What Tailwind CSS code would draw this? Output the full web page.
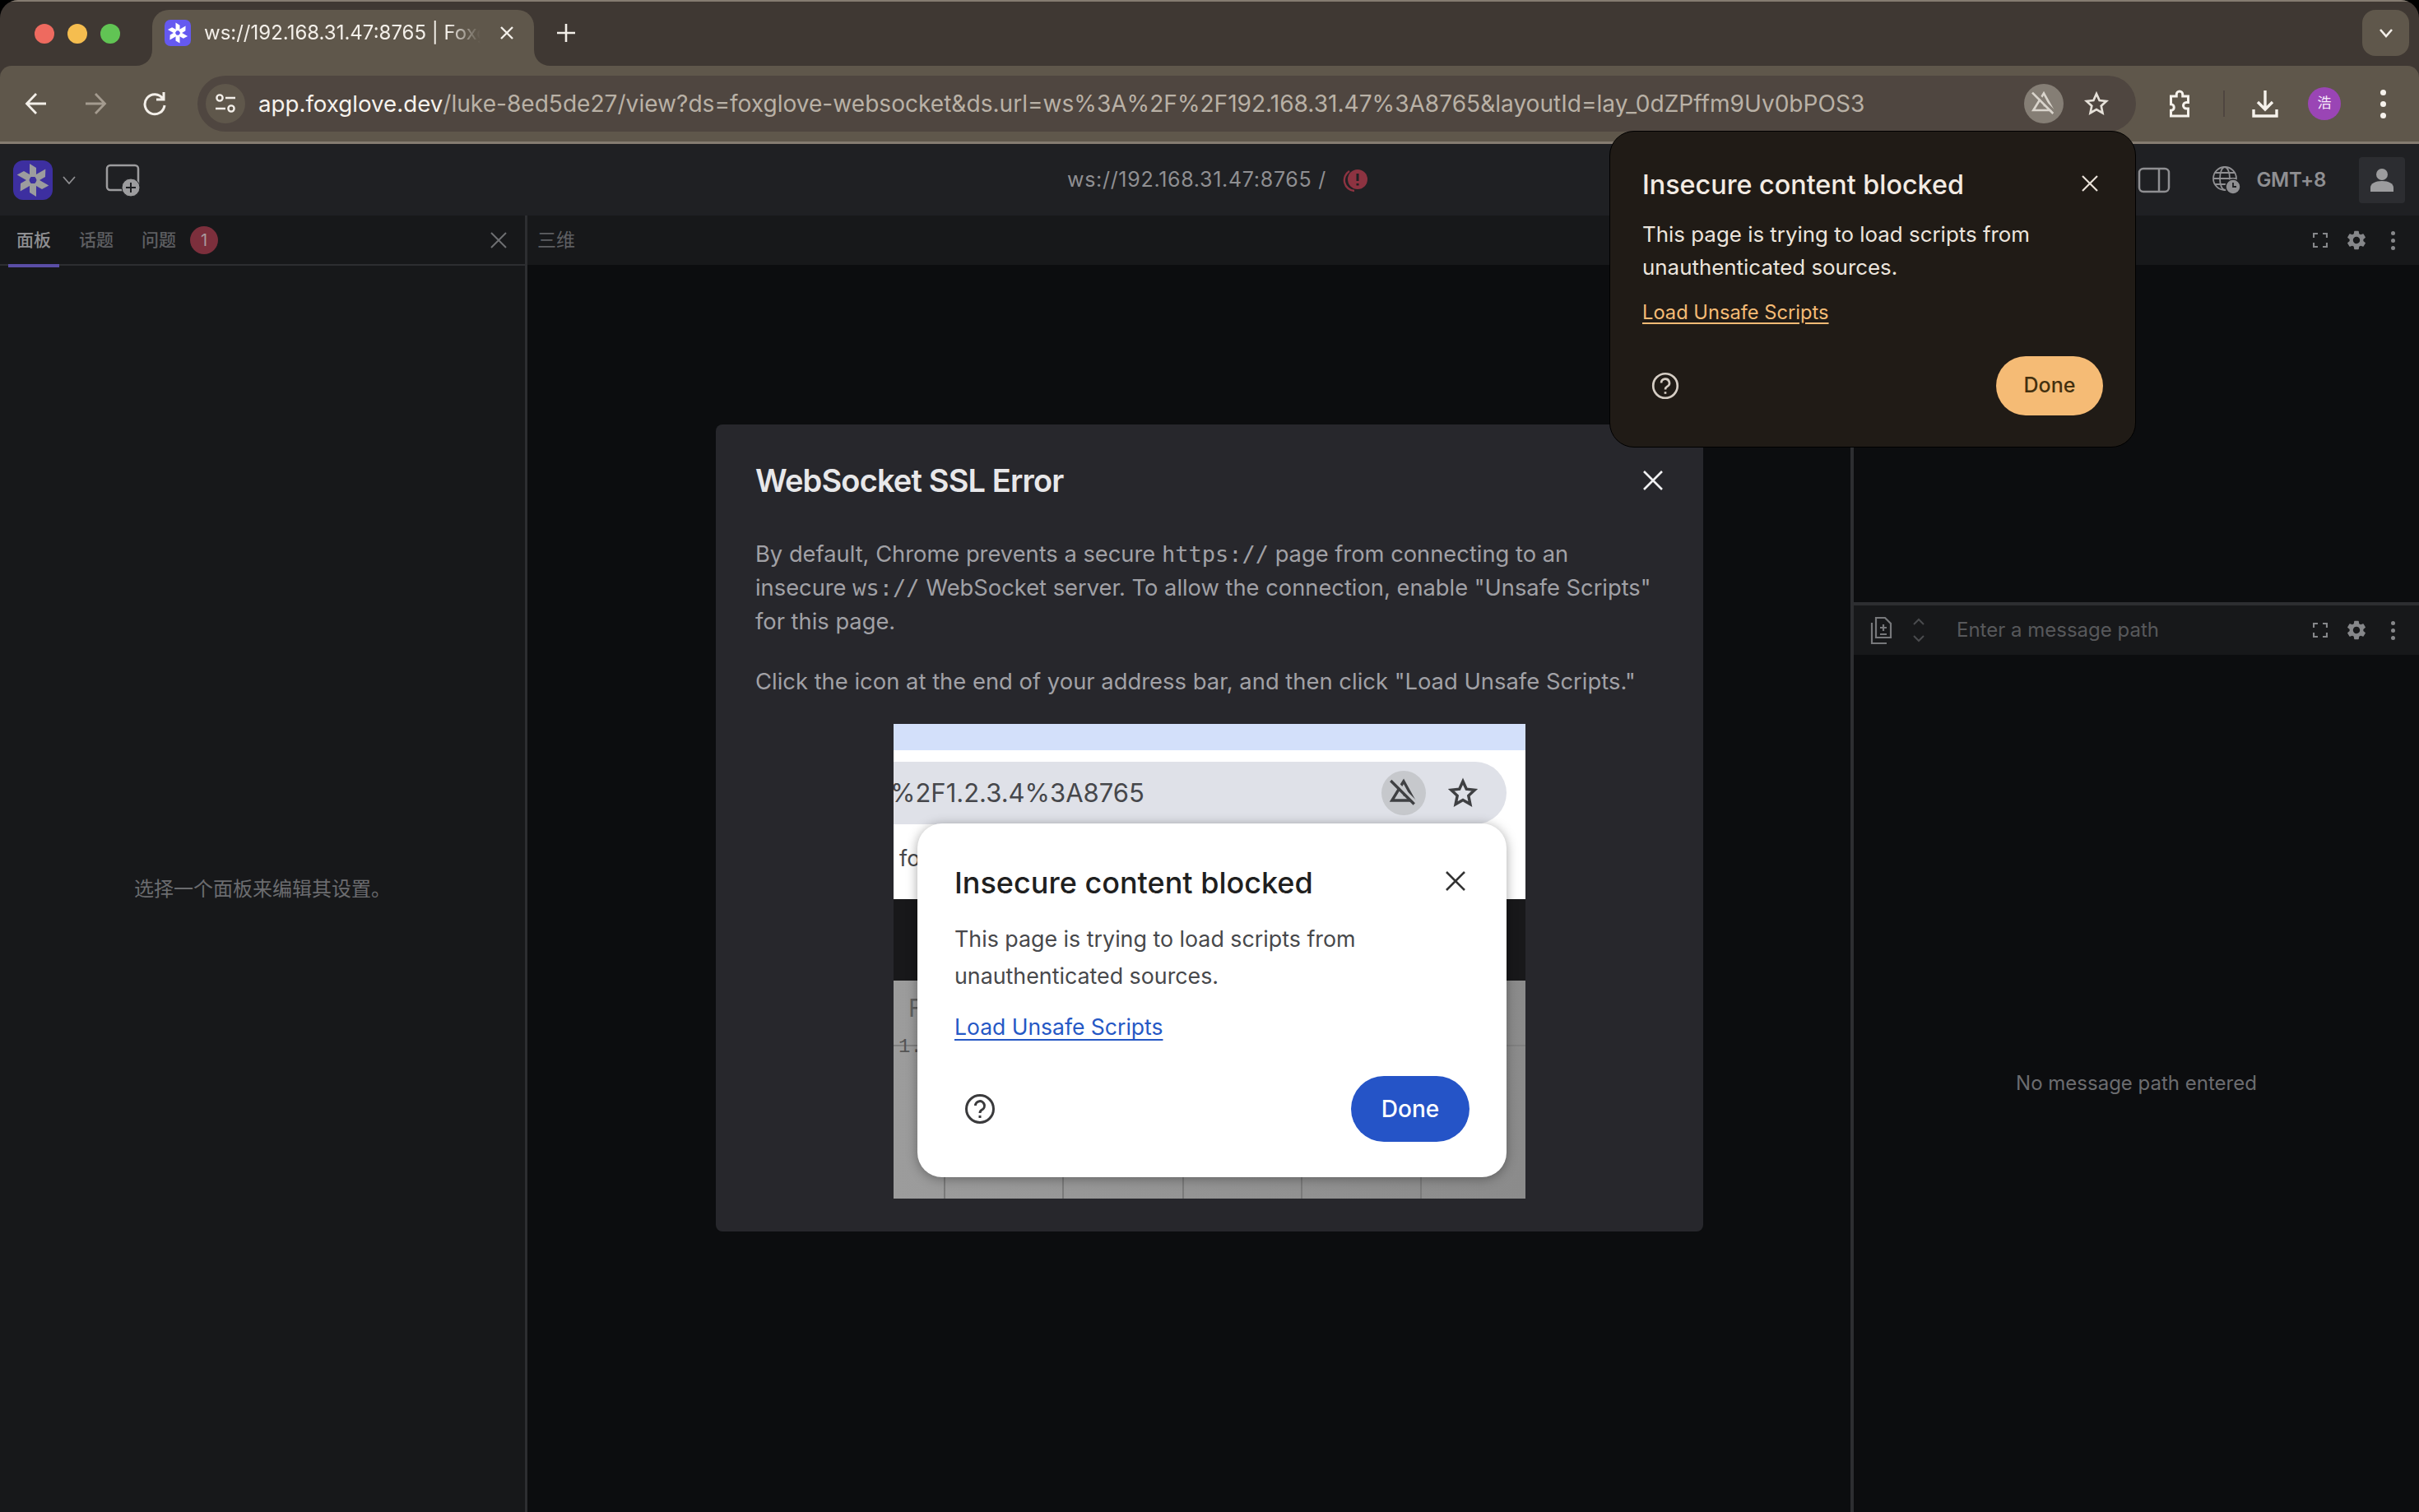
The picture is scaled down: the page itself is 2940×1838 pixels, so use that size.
<!DOCTYPE html>
<html lang="en">
<head>
  <meta charset="UTF-8" />
  <title>ws://192.168.31.47:8765 | Foxglove</title>
  <script src="https://cdn.jsdelivr.net/npm/@tailwindcss/browser@4"></script>
</head>
<body class="bg-black">
<div class="relative w-[2940px] h-[1838px] overflow-hidden flex flex-col rounded-t-[22px] bg-[#3f3833] font-['Inter','Noto_Sans_CJK_SC',sans-serif]">

  <!-- Tab strip -->
  <div class="relative h-[80px] shrink-0 flex items-start border-t-2 border-[#857c71]">
    <div class="flex items-center gap-[16px] pl-[42px] h-[78px] w-[185px]">
      <span class="w-[24px] h-[24px] rounded-full bg-[#ee6a5f]"></span>
      <span class="w-[24px] h-[24px] rounded-full bg-[#f5bd4f]"></span>
      <span class="w-[24px] h-[24px] rounded-full bg-[#61c454]"></span>
    </div>
    <!-- Active tab -->
    <div class="relative mt-[10px] w-[464px] h-[68px] bg-[#5f574b] rounded-t-[20px] flex items-center pl-[15px] pb-[12px]">
      <svg class="absolute -left-[20px] bottom-0" width="20" height="20" viewBox="0 0 20 20"><path d="M20 0V20H0C12 20 20 12 20 0Z" fill="#5f574b"/></svg>
      <svg class="absolute -right-[20px] bottom-0" width="20" height="20" viewBox="0 0 20 20"><path d="M0 0V20H20C8 20 0 12 0 0Z" fill="#5f574b"/></svg>
      <span class="w-[32px] h-[32px] rounded-[7px] bg-[#6559f0] flex items-center justify-center">
        <svg width="30" height="30" viewBox="-24 -24 48 48" fill="#fff">
          <polygon points="-4,-4 -4,-20 4,-15 4,-4"/>
          <polygon points="-4,-4 -4,-20 4,-15 4,-4" transform="rotate(60)"/>
          <polygon points="-4,-4 -4,-20 4,-15 4,-4" transform="rotate(120)"/>
          <polygon points="-4,-4 -4,-20 4,-15 4,-4" transform="rotate(180)"/>
          <polygon points="-4,-4 -4,-20 4,-15 4,-4" transform="rotate(240)"/>
          <polygon points="-4,-4 -4,-20 4,-15 4,-4" transform="rotate(300)"/>
          <circle r="4" fill="#6559f0"/>
        </svg>
      </span>
      <span class="ml-[16px] w-[336px] overflow-hidden whitespace-nowrap text-[24px] text-[#f3efe9] [mask-image:linear-gradient(to_right,black_88%,transparent)]">ws://192.168.31.47:8765 | Foxglove</span>
      <svg class="absolute left-[421px] top-[18px]" width="20" height="20" viewBox="0 0 20 20" stroke="#f3efe9" stroke-width="2.4"><path d="M3 3l14 14M17 3L3 17"/></svg>
    </div>
    <svg class="ml-[28px] mt-[27px]" width="22" height="22" viewBox="0 0 22 22" stroke="#f3efe9" stroke-width="2.6"><path d="M11 0v22M0 11h22"/></svg>
    <div class="ml-auto mr-[12px] mt-[10px] w-[57px] h-[56px] rounded-[16px] bg-[#5f574b] flex items-center justify-center">
      <svg width="20" height="14" viewBox="0 0 20 14" fill="none" stroke="#f3efe9" stroke-width="2.6"><path d="M3 3l7 8 7-8"/></svg>
    </div>
  </div>

  <!-- Toolbar -->
  <div class="h-[95px] shrink-0 bg-[#5f574b] border-b-[3px] border-[#857c71] rounded-t-[14px] flex items-center">
    <div class="w-[240px] shrink-0 h-full flex items-center">
      <svg class="ml-[30px]" width="28" height="28" viewBox="0 0 28 28" fill="none" stroke="#f3efe9" stroke-width="2.8"><path d="M26 14H3M14 2L2.5 14 14 26"/></svg>
      <svg class="ml-[44px]" width="28" height="28" viewBox="0 0 28 28" fill="none" stroke="#a49b8f" stroke-width="2.8"><path d="M2 14h23M14 2l11.5 12L14 26"/></svg>
      <svg class="ml-[44px]" width="28" height="30" viewBox="0 0 28 30" fill="none" stroke="#f3efe9" stroke-width="3"><path d="M24 9a12 12 0 1 0 2 8M25 1v9h-9"/></svg>
    </div>
    <!-- Address bar -->
    <div class="w-[2356px] h-[68px] shrink-0 rounded-full bg-[#4f4640] flex items-center pl-[10px] pr-[32px]">
      <span class="w-[48px] h-[48px] shrink-0 rounded-full bg-[#5f574b] flex items-center justify-center">
        <svg width="26" height="26" viewBox="0 0 26 26" fill="none" stroke="#f3efe9" stroke-width="2.4"><circle cx="6" cy="6" r="3.6"/><path d="M13 6h12M1 19h12"/><circle cx="20" cy="19" r="3.6"/></svg>
      </span>
      <span class="ml-[16px] text-[28.08px] whitespace-nowrap text-[#b9b1a6]"><span class="text-[27.7px] text-[#f6f2ec]">app.foxglove.dev</span>/luke-8ed5de27/view?ds=foxglove-websocket&amp;ds.url=ws%3A%2F%2F192.168.31.47%3A8765&amp;layoutId=lay_0dZPffm9Uv0bPOS3</span>
      <span class="ml-auto w-[48px] h-[48px] rounded-full bg-[#857e75] flex items-center justify-center">
        <svg width="48" height="48" viewBox="0 0 72 72" fill="none" stroke-width="4">
          <path d="M36 17L17 48h36z" stroke="#d9d4cc"/>
          <path d="M19 14l38 38" stroke="#857e75" stroke-width="5"/>
          <path d="M15 16l38 38" stroke="#d9d4cc"/>
          <path d="M37 37v4" stroke="#d9d4cc" stroke-width="3"/>
        </svg>
      </span>
      <svg class="ml-[24px]" width="32" height="32" viewBox="0 0 24 24" fill="none" stroke="#e6e1d9" stroke-width="2"><path d="M12 3l2.7 6 6.3.7-4.7 4.4 1.3 6.4-5.6-3.2-5.6 3.2 1.3-6.4L3 9.7 9.300 9z"/></svg>
    </div>
    <div class="flex-1 h-full flex items-center">
      <svg class="ml-[35px]" width="36" height="36" viewBox="0 0 24 24" fill="none" stroke="#f6f2ec" stroke-width="2"><path d="M5 6h4.500V4.500a2.500 2.500 0 0 1 5 0V6H19v5h-1.500a2.500 2.500 0 0 0 0 5H19v6H5v-4.500a2.500 2.500 0 0 0 0-5V6z"/></svg>
      <span class="ml-[35px] w-[2px] h-[32px] bg-[#4f4640]"></span>
      <svg class="ml-[33px]" width="32" height="34" viewBox="0 0 32 34" fill="none" stroke="#f6f2ec" stroke-width="3.400"><path d="M16 1v22M7 15l9 9 9-9M2 24v8h28v-8"/></svg>
      <span class="ml-[36px] w-[40px] h-[40px] rounded-full bg-[#9a45b5] flex items-center justify-center text-[17px] text-[#f6eafa]">浩</span>
      <span class="ml-[48px] flex flex-col gap-[7px]">
        <span class="w-[7px] h-[7px] rounded-full bg-[#f6f2ec]"></span>
        <span class="w-[7px] h-[7px] rounded-full bg-[#f6f2ec]"></span>
        <span class="w-[7px] h-[7px] rounded-full bg-[#f6f2ec]"></span>
      </span>
    </div>
  </div>

  <!-- App -->
  <div class="relative flex-1 min-h-0 flex flex-col bg-[#0c0d0f]">
    <!-- App header -->
    <div class="relative h-[87px] shrink-0 bg-[#1f2023] flex items-center">
      <span class="ml-[16px] w-[48px] h-[48px] rounded-[12px] bg-[#3d2fa0] flex items-center justify-center">
        <svg width="48" height="48" viewBox="-24 -24 48 48" fill="#9c9c9e">
          <polygon points="-4,-4 -4,-20 4,-15 4,-4"/>
          <polygon points="-4,-4 -4,-20 4,-15 4,-4" transform="rotate(60)"/>
          <polygon points="-4,-4 -4,-20 4,-15 4,-4" transform="rotate(120)"/>
          <polygon points="-4,-4 -4,-20 4,-15 4,-4" transform="rotate(180)"/>
          <polygon points="-4,-4 -4,-20 4,-15 4,-4" transform="rotate(240)"/>
          <polygon points="-4,-4 -4,-20 4,-15 4,-4" transform="rotate(300)"/>
          <circle r="4" fill="#3d2fa0"/>
        </svg>
      </span>
      <svg class="ml-[12px]" width="16" height="10" viewBox="0 0 16 10" fill="none" stroke="#8d8d90" stroke-width="1.800"><path d="M1 1l7 8 7-8"/></svg>
      <svg class="ml-[36px]" width="44" height="40" viewBox="0 0 44 40" fill="none"><rect x="2" y="2" width="38" height="30" rx="4" stroke="#9c9c9e" stroke-width="2.500"/><circle cx="31" cy="29" r="11" fill="#9c9c9e" stroke="#1f2023" stroke-width="1"/><path d="M31 23v12M25 29h12" stroke="#1f2023" stroke-width="2"/></svg>
      <div class="absolute left-[1297px] top-0 h-full flex items-center">
        <span class="text-[25px] tracking-[0.7px] whitespace-nowrap text-[#8f8f92]">ws://192.168.31.47:8765 /</span>
        <svg class="ml-[20px]" width="32" height="32" viewBox="0 0 32 32" fill="none"><path d="M8 5a13 13 0 0 0 6 24" stroke="#8d3341" stroke-width="2.400"/><circle cx="18" cy="15" r="12" fill="#8d3341"/><path d="M18 8v9M18 20v2.500" stroke="#1f2023" stroke-width="3"/></svg>
      </div>
      <div class="ml-auto flex items-center pr-[17px]">
        <svg width="40" height="32" viewBox="0 0 40 32" fill="none" stroke="#8f8f92" stroke-width="2.500"><rect x="2" y="2" width="36" height="28" rx="5"/><path d="M26 2v28"/></svg>
        <svg class="ml-[50px]" width="36" height="36" viewBox="0 0 36 36" fill="none" stroke="#8f8f92" stroke-width="1.800"><circle cx="16" cy="16" r="14"/><ellipse cx="16" cy="16" rx="6" ry="14"/><path d="M2 16h28M4 9h24M4 23h24"/><circle cx="26" cy="26" r="9" fill="#8f8f92" stroke="#1f2023" stroke-width="1.500"/><path d="M26 21v5h4" stroke="#1f2023" stroke-width="1.800"/></svg>
        <span class="ml-[18px] text-[24px] font-semibold tracking-[-0.3px] text-[#8f8f92]">GMT+8</span>
        <span class="ml-[40px] w-[56px] h-[56px] rounded-[4px] bg-[#2c2d31] flex items-center justify-center">
          <svg width="32" height="32" viewBox="0 0 32 32" fill="#9c9c9e"><circle cx="16" cy="9" r="7"/><path d="M2 30v-5c0-5 6-8 14-8s14 3 14 8v5z"/></svg>
        </span>
      </div>
    </div>

    <!-- Panels -->
    <div class="flex-1 min-h-0 flex">
      <!-- Sidebar -->
      <aside class="w-[638px] shrink-0 flex flex-col bg-[#17181a]">
        <div class="relative h-[61px] shrink-0 flex items-center border-b-2 border-[#2d2e31] text-[21px] font-medium text-[#5e5f62]">
          <span class="relative ml-[20px] w-[44px] text-[#8f8f92]">面板<span class="absolute -left-[10px] -bottom-[18px] w-[62px] h-[4px] bg-[#5a4ea6]"></span></span>
          <span class="ml-[32px] w-[44px]">话题</span>
          <span class="ml-[32px] w-[44px]">问题</span>
          <span class="ml-[15px] w-[34px] h-[34px] rounded-full bg-[#7c2f3c] flex items-center justify-center text-[20px] font-normal text-[#a99a9c]">1</span>
          <svg class="ml-auto mr-[22px]" width="20" height="20" viewBox="0 0 20 20" stroke="#6e6f72" stroke-width="2"><path d="M1 1l18 18M19 1L1 19"/></svg>
        </div>
        <div class="flex-1 flex items-center justify-center text-[24px] text-[#6b6c6f]">选择一个面板来编辑其设置。</div>
      </aside>
      <div class="w-[3px] shrink-0 bg-[#2d2e31]"></div>

      <!-- 3D panel -->
      <main class="w-[1608px] shrink-0 flex flex-col">
        <div class="h-[60px] shrink-0 bg-[#17181a] flex items-center pl-[12px] text-[23px] text-[#5e5f62]">三维</div>
      </main>
      <div class="w-[4px] shrink-0 bg-[#2d2e31]"></div>

      <!-- Right column -->
      <div class="flex-1 flex flex-col min-w-0">
        <div class="h-[470px] shrink-0 flex flex-col">
          <div class="h-[60px] bg-[#17181a] flex items-center justify-end pr-[29px]">
            <svg width="18" height="18" viewBox="0 0 18 18" fill="none" stroke="#86878a" stroke-width="2.200"><path d="M1 6V1h5M12 1h5v5M17 12v5h-5M6 17H1v-5"/></svg>
            <svg class="ml-[21px] mr-[28px]" width="28" height="28" viewBox="0 0 24 24" fill="#86878a"><path d="M19.140 12.940c.040-.300.060-.610.060-.940 0-.320-.020-.640-.070-.940l2.030-1.580a.49.49 0 0 0 .120-.610l-1.920-3.320a.488.488 0 0 0-.590-.220l-2.390.960c-.500-.380-1.030-.700-1.620-.940l-.360-2.540a.484.484 0 0 0-.480-.410h-3.840c-.240 0-.430.170-.470.410l-.360 2.540c-.590.240-1.130.570-1.620.940l-2.390-.960c-.220-.080-.470 0-.590.220L2.740 8.870c-.120.210-.080.470.120.610l2.030 1.580c-.050.300-.090.630-.090.940s.020.640.070.940l-2.030 1.580a.49.49 0 0 0-.120.610l1.920 3.320c.120.220.370.290.590.220l2.390-.960c.500.380 1.030.700 1.620.940l.360 2.540c.050.240.240.410.480.410h3.840c.240 0 .440-.170.470-.410l.360-2.540c.590-.240 1.130-.560 1.620-.940l2.390.960c.220.080.470 0 .590-.220l1.920-3.320c.120-.220.070-.470-.120-.610l-2.010-1.580zM12 15.600A3.610 3.610 0 0 1 8.400 12c0-1.980 1.620-3.600 3.600-3.600s3.600 1.620 3.600 3.600-1.620 3.600-3.600 3.600z"/></svg>
            <span class="flex flex-col gap-[4px]">
              <span class="w-[5px] h-[5px] rounded-full bg-[#86878a]"></span>
              <span class="w-[5px] h-[5px] rounded-full bg-[#86878a]"></span>
              <span class="w-[5px] h-[5px] rounded-full bg-[#86878a]"></span>
            </span>
          </div>
        </div>
        <div class="h-[4px] shrink-0 bg-[#2d2e31]"></div>
        <div class="flex-1 flex flex-col">
          <div class="h-[60px] shrink-0 bg-[#17181a] flex items-center pl-[18px] pr-[29px]">
            <svg width="30" height="34" viewBox="0 0 30 34" fill="none" stroke="#77787b" stroke-width="2.200"><path d="M9 2h11l7 7v17H9zM4 8v25h18"/><path d="M18 10v8M14 14h8M14 22h8"/></svg>
            <svg class="ml-[24px]" width="14" height="30" viewBox="0 0 14 30" fill="none" stroke="#4a4b4e" stroke-width="2"><path d="M1 8l6-6 6 6M1 22l6 6 6-6"/></svg>
            <span class="ml-[39px] text-[24px] text-[#57585b]">Enter a message path</span>
            <svg class="ml-auto" width="18" height="18" viewBox="0 0 18 18" fill="none" stroke="#86878a" stroke-width="2.200"><path d="M1 6V1h5M12 1h5v5M17 12v5h-5M6 17H1v-5"/></svg>
            <svg class="ml-[21px] mr-[28px]" width="28" height="28" viewBox="0 0 24 24" fill="#86878a"><path d="M19.140 12.940c.040-.300.060-.610.060-.940 0-.320-.020-.640-.070-.940l2.030-1.580a.49.49 0 0 0 .120-.610l-1.920-3.320a.488.488 0 0 0-.590-.220l-2.390.960c-.500-.380-1.030-.700-1.620-.940l-.360-2.540a.484.484 0 0 0-.480-.410h-3.840c-.240 0-.430.170-.470.410l-.360 2.540c-.590.240-1.130.570-1.620.940l-2.390-.960c-.220-.080-.470 0-.590.220L2.740 8.870c-.120.210-.080.470.120.610l2.030 1.580c-.050.300-.090.630-.090.940s.020.640.070.940l-2.030 1.580a.49.49 0 0 0-.120.610l1.920 3.320c.120.220.370.290.590.220l2.390-.960c.500.380 1.030.700 1.620.940l.360 2.540c.050.240.240.410.480.410h3.840c.240 0 .440-.170.470-.410l.360-2.540c.590-.240 1.130-.560 1.620-.940l2.390.960c.220.080.470 0 .590-.220l1.920-3.320c.120-.220.070-.470-.120-.610l-2.010-1.580zM12 15.600A3.610 3.610 0 0 1 8.400 12c0-1.980 1.620-3.600 3.600-3.600s3.600 1.620 3.600 3.600-1.620 3.600-3.600 3.600z"/></svg>
            <span class="flex flex-col gap-[4px]">
              <span class="w-[5px] h-[5px] rounded-full bg-[#86878a]"></span>
              <span class="w-[5px] h-[5px] rounded-full bg-[#86878a]"></span>
              <span class="w-[5px] h-[5px] rounded-full bg-[#86878a]"></span>
            </span>
          </div>
          <div class="flex-1 flex items-center justify-center text-[24px] text-[#6b6c6f]">No message path entered</div>
        </div>
      </div>
    </div>

    <!-- Modal -->
    <div class="absolute inset-0 flex items-center justify-center">
      <div class="w-[1200px] h-[981px] rounded-[8px] bg-[#27272c] pt-[48px] pl-[48px] pr-[48px] flex flex-col">
        <div class="h-[40px] flex items-center justify-between">
          <h2 class="text-[38px] font-semibold tracking-[-0.85px] text-[#e8e8ea]">WebSocket SSL Error</h2>
          <svg class="mr-[1px]" width="24" height="24" viewBox="0 0 24 24" stroke="#f0f0f2" stroke-width="2.600"><path d="M1 1l22 22M23 1L1 23"/></svg>
        </div>
        <p class="mt-[49px] text-[27.3px] leading-[41px] text-[#a1a1a6]">By default, Chrome prevents a secure <code class="font-['DejaVu_Sans_Mono',monospace] text-[27px]">https://</code> page from connecting to an<br>insecure <code class="font-['DejaVu_Sans_Mono',monospace] text-[27px]">ws://</code> WebSocket server. To allow the connection, enable "Unsafe Scripts"<br>for this page.</p>
        <p class="mt-[32px] text-[27.4px] leading-[41px] text-[#a1a1a6]">Click the icon at the end of your address bar, and then click "Load Unsafe Scripts."</p>

        <!-- Embedded screenshot -->
        <div class="relative mt-[31px] ml-[168px] w-[768px] h-[577px] overflow-hidden bg-white flex flex-col">
          <div class="h-[32px] shrink-0 bg-[#d3e0fa]"></div>
          <div class="h-[181px] shrink-0 bg-white pt-[14px]">
            <div class="w-[745px] h-[76px] rounded-r-full bg-[#dfe1e8] flex items-center whitespace-nowrap">
              <span class="-ml-[4px] text-[31px] text-[#46474b]">%2F1.2.3.4%3A8765</span>
              <span class="ml-auto w-[54px] h-[54px] rounded-full bg-[#c6c8cc] flex items-center justify-center">
                <svg width="54" height="54" viewBox="0 0 72 72" fill="none" stroke-width="4.500">
                  <path d="M36 17L17 48h36z" stroke="#3f4043"/>
                  <path d="M19 14l38 38" stroke="#c6c8cc" stroke-width="5"/>
                  <path d="M15 16l38 38" stroke="#3f4043"/>
                  <path d="M37 37v4" stroke="#3f4043" stroke-width="3"/>
                </svg>
              </span>
              <svg class="ml-[26px] mr-[34px]" width="38" height="38" viewBox="0 0 24 24" fill="none" stroke="#3f4043" stroke-width="2.200"><path d="M12 3l2.700 6 6.300.7-4.700 4.400 1.300 6.400-5.600-3.200-5.600 3.200 1.300-6.400L3 9.700 9.300 9z"/></svg>
            </div>
            <div class="pl-[7px] pt-[26px] text-[27px] leading-[32px] text-[#46474b]">fo</div>
          </div>
          <div class="h-[99px] shrink-0 bg-[#18181a]"></div>
          <div class="flex-1 bg-gradient-to-r from-[#9c9c9c] to-[#8b8b8b] flex flex-col">
            <div class="h-[80px] shrink-0 border-b-2 border-[#808080] pl-[18px] pt-[15px] text-[30px] leading-[36px] text-[#606060]">F</div>
            <div class="flex-1 flex">
              <div class="w-[63px] border-r-2 border-[#7a7a7a] pl-[6px] font-['Liberation_Mono',monospace] text-[24px] leading-[28px] text-[#555555]"><span class="block -mt-[13px]">1.</span></div>
              <div class="w-[144px] border-r-2 border-[#7a7a7a]"></div>
              <div class="w-[146px] border-r-2 border-[#7a7a7a]"></div>
              <div class="w-[144px] border-r-2 border-[#7a7a7a]"></div>
              <div class="w-[145px] border-r-2 border-[#7a7a7a]"></div>
            </div>
          </div>
          <!-- Bubble over the screenshot -->
          <div class="absolute left-[29px] top-[121px] w-[716px] h-[430px] rounded-[30px] bg-white shadow-[0_2px_14px_rgba(0,0,0,0.35)] pl-[45px] pr-[45px] pt-[49px] flex flex-col">
            <div class="relative h-[46px] flex items-center">
              <h3 class="text-[36px] font-medium text-[#1f1f1f] whitespace-nowrap">Insecure content blocked</h3>
              <svg class="absolute left-[597px] top-[9px]" width="24" height="24" viewBox="0 0 24 24" stroke="#333" stroke-width="2.600"><path d="M1 1l22 22M23 1L1 23"/></svg>
            </div>
            <p class="mt-[23px] text-[26.8px] leading-[45px] text-[#47484b]">This page is trying to load scripts from<br>unauthenticated sources.</p>
            <a class="mt-[17px] text-[26.5px] leading-[44px] text-[#2558c5] underline underline-offset-[5px] decoration-2">Load Unsafe Scripts</a>
            <div class="mt-[38px] flex items-center justify-between">
              <svg class="ml-[12px]" width="38" height="38" viewBox="0 0 38 38" fill="none" stroke="#3a3a3c" stroke-width="3"><circle cx="19" cy="19" r="16.500"/><path d="M13.500 15a5.500 5.500 0 1 1 8 5c-1.800 1-2.500 2-2.500 4M19 27v3"/></svg>
              <span class="w-[144px] h-[80px] rounded-full bg-[#2554c7] flex items-center justify-center text-[28px] font-medium text-white">Done</span>
            </div>
          </div>
        </div>
      </div>
    </div>
  </div>

  <!-- Chrome bubble -->
  <div class="absolute left-[1956px] top-[159px] w-[640px] h-[385px] rounded-[30px] bg-[#201b16] border border-black pl-[39px] pr-[39px] pt-[43px] flex flex-col">
    <div class="relative h-[44px] flex items-center">
      <h3 class="text-[32.3px] font-medium text-[#f3ebe3] whitespace-nowrap">Insecure content blocked</h3>
      <svg class="absolute left-[534px] top-[10px]" width="20" height="20" viewBox="0 0 20 20" stroke="#e9e1d8" stroke-width="2.200"><path d="M1 1l18 18M19 1L1 19"/></svg>
    </div>
    <p class="mt-[18px] text-[25.9px] leading-[40px] text-[#ece5dd]">This page is trying to load scripts from<br>unauthenticated sources.</p>
    <a class="mt-[15px] text-[23.7px] leading-[40px] text-[#f5bb75] underline underline-offset-[4px]">Load Unsafe Scripts</a>
    <div class="mt-[33px] flex items-center justify-between">
      <svg class="ml-[11px]" width="34" height="34" viewBox="0 0 38 38" fill="none" stroke="#d5cdc4" stroke-width="3"><circle cx="19" cy="19" r="16.500"/><path d="M13.500 15a5.500 5.500 0 1 1 8 5c-1.800 1-2.500 2-2.500 4M19 27v3"/></svg>
      <span class="w-[130px] h-[72px] rounded-full bg-[#f5bb75] flex items-center justify-center text-[25px] font-medium text-[#43300f]">Done</span>
    </div>
  </div>
</div>
</body>
</html>
